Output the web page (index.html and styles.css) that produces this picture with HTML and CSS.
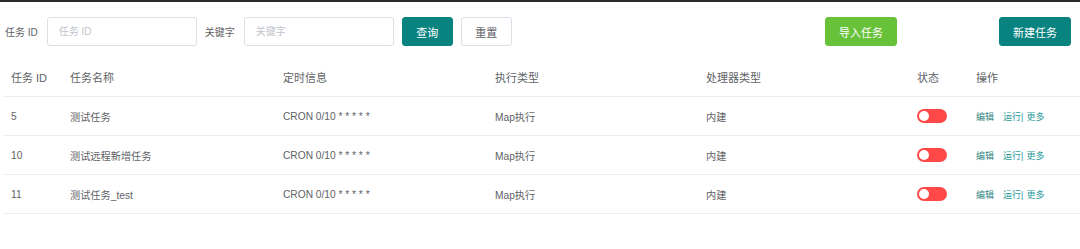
FILE: index.html
```html
<!DOCTYPE html>
<html lang="zh-CN">
<head>
    <meta charset="UTF-8" />
    <meta name="viewport" content="width=device-width,initial-scale=1.0" />
    <title>任务管理</title>
    <link rel="stylesheet" href="styles.css">
</head>
<body>
    <div class="page">
        <div class="toolbar">
            <div class="search">
                <label>任务 ID</label>
                <input type="text" placeholder="任务 ID">
                <label>关键字</label>
                <input type="text" placeholder="关键字">
                <button class="btn btn-primary">查询</button>
                <button class="btn">重置</button>
            </div>
            <div class="actions">
                <button class="btn btn-success">导入任务</button>
                <button class="btn btn-primary">新建任务</button>
            </div>
        </div>

        <table class="task-table">
            <colgroup>
                <col style="width:59px">
                <col style="width:213px">
                <col style="width:212px">
                <col style="width:211px">
                <col style="width:211px">
                <col style="width:59px">
                <col style="width:112px">
            </colgroup>
            <thead>
                <tr>
                    <th>任务 ID</th>
                    <th>任务名称</th>
                    <th>定时信息</th>
                    <th>执行类型</th>
                    <th>处理器类型</th>
                    <th>状态</th>
                    <th>操作</th>
                </tr>
            </thead>
            <tbody>
                <tr>
                    <td>5</td>
                    <td>测试任务</td>
                    <td>CRON 0/10 * * * * *</td>
                    <td>Map执行</td>
                    <td>内建</td>
                    <td><span class="switch"></span></td>
                    <td class="ops"><a class="edit">编辑</a><a>运行</a>|<a>更多</a></td>
                </tr>
                <tr>
                    <td>10</td>
                    <td>测试远程新增任务</td>
                    <td>CRON 0/10 * * * * *</td>
                    <td>Map执行</td>
                    <td>内建</td>
                    <td><span class="switch"></span></td>
                    <td class="ops"><a class="edit">编辑</a><a>运行</a>|<a>更多</a></td>
                </tr>
                <tr>
                    <td>11</td>
                    <td>测试任务_test</td>
                    <td>CRON 0/10 * * * * *</td>
                    <td>Map执行</td>
                    <td>内建</td>
                    <td><span class="switch"></span></td>
                    <td class="ops"><a class="edit">编辑</a><a>运行</a>|<a>更多</a></td>
                </tr>
            </tbody>
        </table>
    </div>
</body>
</html>
```
FILE: styles.css
```css
body {
    margin: 0;
    background: #fff;
    font-family: "Liberation Sans", "Noto Sans CJK SC", sans-serif;
    color: #606266;
}

.page {
    border-top: 2px solid #2b2b2b;
    height: 247px;
}

.toolbar {
    display: flex;
    justify-content: space-between;
    align-items: center;
    padding: 15px 9px 0 5px;
    margin-bottom: 12px;
}

.search {
    display: flex;
    align-items: center;
    gap: 8px;
}

.search label {
    font-size: 10px;
    color: #606266;
    margin-right: 1px;
}

.search input {
    box-sizing: border-box;
    width: 150px;
    height: 29px;
    padding: 0 11px;
    border: 1px solid #dcdfe6;
    border-radius: 3px;
    font-size: 10px;
    font-family: inherit;
    outline: none;
}

.search input::placeholder {
    color: #c0c4cc;
}

.actions {
    display: flex;
    gap: 102px;
}

.btn {
    box-sizing: border-box;
    height: 29px;
    width: 51px;
    border: 1px solid #dcdfe6;
    border-radius: 3px;
    background: #fff;
    color: #606266;
    font-size: 11px;
    font-family: inherit;
    cursor: pointer;
    padding: 0;
}

.actions .btn {
    width: 72px;
}

.btn-primary {
    background: #088380;
    border-color: #088380;
    color: #fff;
}

.btn-success {
    background: #67c23a;
    border-color: #67c23a;
    color: #fff;
}

.task-table {
    margin-left: 3px;
    width: 1077px;
    border-collapse: collapse;
    table-layout: fixed;
}

.task-table th,
.task-table td {
    text-align: left;
    padding: 0 0 0 8px;
    height: 38px;
    border-bottom: 1px solid #ebeef5;
    white-space: nowrap;
}

.task-table th {
    font-size: 11px;
    font-weight: normal;
    color: #606266;
}

.task-table td {
    font-size: 10.2px;
}

.switch {
    display: block;
    position: relative;
    width: 30px;
    height: 14px;
    border-radius: 7px;
    background: #ff4949;
}

.switch::after {
    content: "";
    position: absolute;
    left: 2px;
    top: 2px;
    width: 10px;
    height: 10px;
    border-radius: 50%;
    background: #fff;
}

.ops {
    font-size: 9px !important;
    color: #2b9a9a;
}

.ops a {
    color: #2b9a9a;
    cursor: pointer;
}

.ops a.edit {
    color: #2f8585;
    margin-right: 9px;
}

.ops a:last-child {
    margin-left: 3px;
}
```
